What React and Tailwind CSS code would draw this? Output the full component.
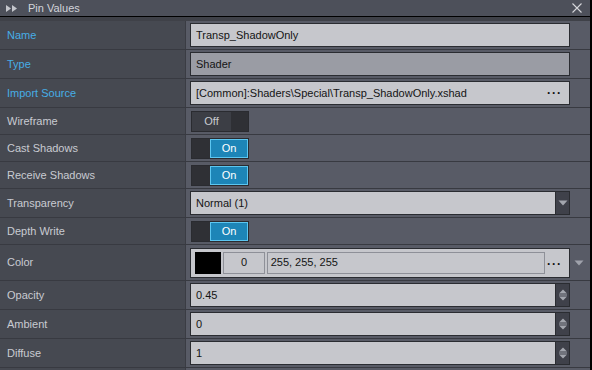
import React from 'react';

const font = { fontFamily: '"Liberation Sans", Arial, sans-serif' };

const Row = ({ label, accent, h = 'h-[29px]', children }) => (
    <div className={`flex ${h} border-b border-[#383a41]`}>
        <div className={`w-[186px] shrink-0 flex items-center pl-[7px] border-r border-[#3a3c43] bg-[#464951] text-[11px] ${accent ? 'text-[#46aee6]' : 'text-[#c9cbd1]'}`}>
            {label}
        </div>
        <div className="flex-1 flex items-center pl-[4px] pr-[20px] bg-[#585b66]">{children}</div>
    </div>
);

const TextBox = ({ value, readOnly, right }) => (
    <div className={`flex-1 h-[24px] flex items-center border border-[#2a2c31] ${readOnly ? 'bg-[#9a9ca4]' : 'bg-[#c6c7cc]'}`}>
        <span className="flex-1 pl-[5px] text-[11px] text-[#141414] whitespace-nowrap">{value}</span>
        {right}
    </div>
);

const Dots = () => (
    <span className="pr-[7px] text-[12px] font-bold tracking-[1px] text-[#111] leading-none">···</span>
);

const Spin = () => (
    <div className="w-[14px] h-full bg-[#3f414a] border-l border-[#2a2c31] flex flex-col items-center justify-center">
        <svg width="10" height="16" viewBox="0 0 10 16">
            <path d="M1 6.5 L5 2.5 L9 6.5 Z" fill="#a3a6ae" />
            <line x1="1" y1="8" x2="9" y2="8" stroke="#a3a6ae" strokeWidth="1" />
            <path d="M1 9.5 L9 9.5 L5 13.5 Z" fill="#a3a6ae" />
        </svg>
    </div>
);

const DownArrow = ({ color = '#a3a6ae' }) => (
    <svg width="10" height="6" viewBox="0 0 10 6">
        <path d="M0.5 0.5 L9.5 0.5 L5 5.5 Z" fill={color} />
    </svg>
);

const Toggle = ({ on }) => (
    <div className="ml-[1px] w-[58px] h-[21px] flex border border-[#2a2b30]">
        {on ? (
            <>
                <div className="w-[18px] bg-[#2f3035]" />
                <div className="flex-1 flex items-center justify-center bg-[#1d85b7] border border-[#5cc6f0] text-[11px] text-white">On</div>
            </>
        ) : (
            <>
                <div className="w-[39px] flex items-center justify-center bg-[#3c3e45] text-[11px] text-[#c9cbd1]">Off</div>
                <div className="flex-1 bg-[#2f3035]" />
            </>
        )}
    </div>
);

export default function App() {
    return (
        <div style={font} className="w-[592px] h-[370px] overflow-hidden bg-[#585b66] flex flex-col border-r-2 border-black">
            {/* Title bar */}
            <div className="h-[17px] shrink-0 flex items-center bg-[#4d505a] border-b border-black">
                <svg className="ml-[6px]" width="11" height="7" viewBox="0 0 11 7">
                    <path d="M0 0 L5 3.5 L0 7 Z" fill="#c4c6cc" />
                    <path d="M6 0 L11 3.5 L6 7 Z" fill="#c4c6cc" />
                </svg>
                <span className="ml-[11px] text-[11px] text-[#d2d4da]">Pin Values</span>
                <svg className="ml-auto mr-[8px]" width="10" height="10" viewBox="0 0 10 10">
                    <path d="M0.5 0.5 L9.5 9.5 M9.5 0.5 L0.5 9.5" stroke="#d6d7db" strokeWidth="1.1" />
                </svg>
            </div>
            <div className="h-[4px] shrink-0 bg-[#3f4148]" />

            <Row label="Name" accent>
                <TextBox value="Transp_ShadowOnly" />
            </Row>
            <Row label="Type" accent>
                <TextBox value="Shader" readOnly />
            </Row>
            <Row label="Import Source" accent>
                <TextBox value="[Common]:Shaders\Special\Transp_ShadowOnly.xshad" right={<Dots />} />
            </Row>
            <Row label="Wireframe" h="h-[27px]">
                <Toggle />
            </Row>
            <Row label="Cast Shadows" h="h-[27px]">
                <Toggle on />
            </Row>
            <Row label="Receive Shadows" h="h-[27px]">
                <Toggle on />
            </Row>
            <Row label="Transparency">
                <TextBox
                    value="Normal (1)"
                    right={
                        <div className="w-[14px] h-full bg-[#3f414a] border-l border-[#2a2c31] flex items-center justify-center">
                            <DownArrow />
                        </div>
                    }
                />
            </Row>
            <Row label="Depth Write" h="h-[27px]">
                <Toggle on />
            </Row>
            <div className="flex h-[36px] border-b border-[#383a41]">
                <div className="w-[186px] shrink-0 flex items-center pl-[7px] border-r border-[#3a3c43] bg-[#464951] text-[11px] text-[#c9cbd1]">
                    Color
                </div>
                <div className="flex-1 flex items-center pl-[4px] bg-[#585b66]">
                    <div className="w-[380px] h-[30px] flex items-center gap-[2px] pl-[4px] border border-[#2a2c31] bg-[#c6c7cc]">
                        <div className="w-[27px] h-[22px] bg-black" />
                        <div className="w-[42px] h-[22px] flex items-center justify-center border border-[#8e9098] text-[11px] text-[#141414]">0</div>
                        <div className="w-[284px] h-[22px] flex items-center pl-[3px] border border-[#8e9098] text-[11px] text-[#141414]">255, 255, 255</div>
                        <span className="ml-auto"><Dots /></span>
                    </div>
                    <div className="flex-1 flex justify-center pr-[2px]">
                        <DownArrow color="#9fa2ab" />
                    </div>
                </div>
            </div>
            <Row label="Opacity">
                <TextBox value="0.45" right={<Spin />} />
            </Row>
            <Row label="Ambient">
                <TextBox value="0" right={<Spin />} />
            </Row>
            <Row label="Diffuse">
                <TextBox value="1" right={<Spin />} />
            </Row>
            <div className="flex flex-1">
                <div className="w-[186px] border-r border-[#3a3c43] bg-[#464951]" />
                <div className="flex-1" />
            </div>
        </div>
    );
}
